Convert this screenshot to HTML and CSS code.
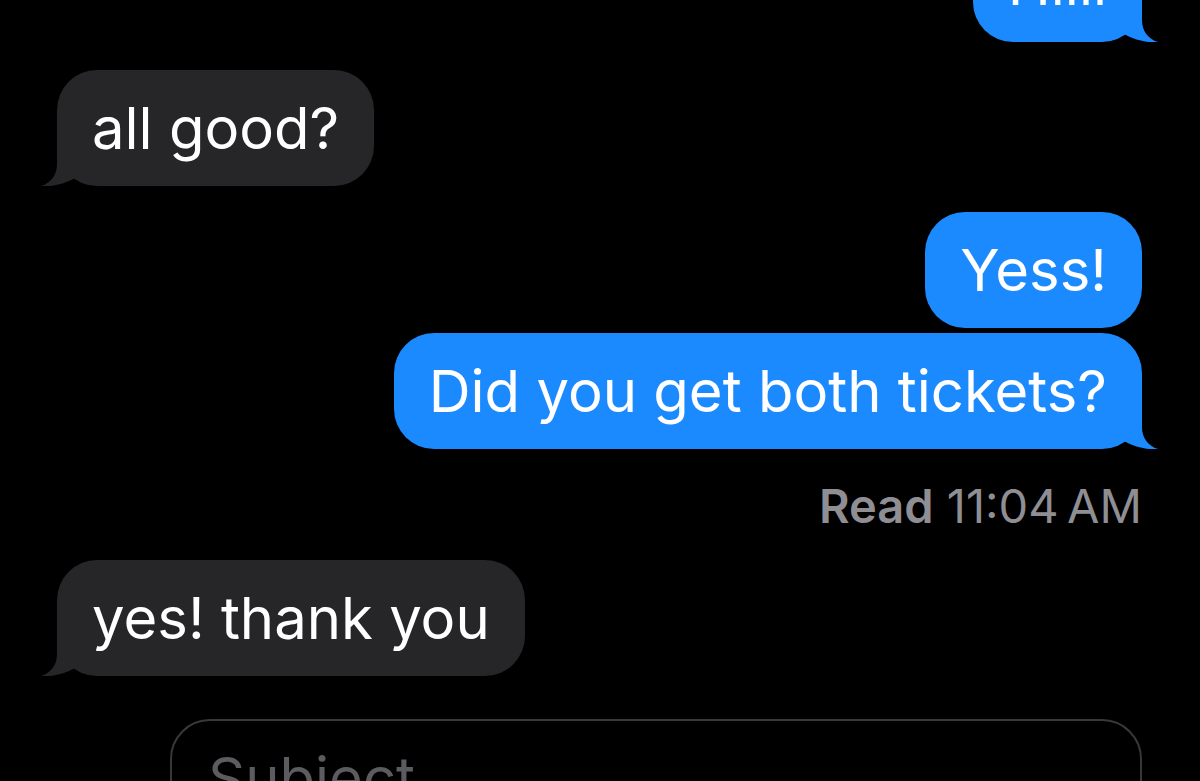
FILE: index.html
```html
<!DOCTYPE html>
<html lang="en">
<head>
    <meta charset="UTF-8">
    <meta name="viewport" content="width=device-width, initial-scale=1.0">
    <title>Messages</title>
    <link rel="stylesheet" href="styles.css">
</head>
<body>
    <div class="thread">
        <div class="bubble sent first">Hiiii
            <svg class="tail tail-right" width="40" height="44" viewBox="0 0 40 44"><path d="M0 0 H24 V22 C24 33 30 41 40 44 C30 45 16 42 6 36 H0 Z"/></svg>
        </div>

        <div class="bubble received gap-big">all good?
            <svg class="tail tail-left" width="40" height="44" viewBox="0 0 40 44"><path d="M0 0 H24 V22 C24 33 30 41 40 44 C30 45 16 42 6 36 H0 Z"/></svg>
        </div>

        <div class="bubble sent gap-mid">Yess!</div>
        <div class="bubble sent gap-small">Did you get both tickets?
            <svg class="tail tail-right" width="40" height="44" viewBox="0 0 40 44"><path d="M0 0 H24 V22 C24 33 30 41 40 44 C30 45 16 42 6 36 H0 Z"/></svg>
        </div>
        <div class="receipt"><b>Read</b> 11:04&#8201;AM</div>

        <div class="bubble received gap-mid">yes! thank you
            <svg class="tail tail-left" width="40" height="44" viewBox="0 0 40 44"><path d="M0 0 H24 V22 C24 33 30 41 40 44 C30 45 16 42 6 36 H0 Z"/></svg>
        </div>

        <div class="compose">
            <div class="subject">Subject</div>
        </div>
    </div>
</body>
</html>
```

FILE: styles.css
```css
body {
    margin: 0;
    background-color: #000;
    height: 781px;
    overflow: hidden;
    font-family: Inter, "Noto Sans", sans-serif;
}
.thread {
    display: flex;
    flex-direction: column;
    padding: 0 58px 0 57px;
}
.bubble {
    position: relative;
    font-size: 58px;
    line-height: 70px;
    padding: 23px 35px;
    border-radius: 40px;
    color: #fff;
    white-space: nowrap;
}
.sent {
    align-self: flex-end;
    background-color: #1c8aff;
}
.received {
    align-self: flex-start;
    background-color: #262628;
}
.first {
    margin-top: -74px;
}
.gap-big {
    margin-top: 28px;
}
.gap-mid {
    margin-top: 26px;
}
.gap-small {
    margin-top: 5px;
}
.tail {
    position: absolute;
    bottom: 0;
}
.tail-right {
    right: -16px;
}
.tail-left {
    left: -16px;
    transform: scaleX(-1);
}
.sent .tail path {
    fill: #1c8aff;
}
.received .tail path {
    fill: #262628;
}
.receipt {
    align-self: flex-end;
    margin-top: 28px;
    font-size: 47px;
    line-height: 57px;
    color: #8e8e93;
}
.receipt b {
    font-weight: 600;
}
.compose {
    margin: 43px 0 0 113px;
    border: 2px solid #38383a;
    border-radius: 40px;
    padding: 22px 36px;
    height: 200px;
}
.subject {
    font-size: 58px;
    line-height: 70px;
    color: #5c5c60;
}
```
